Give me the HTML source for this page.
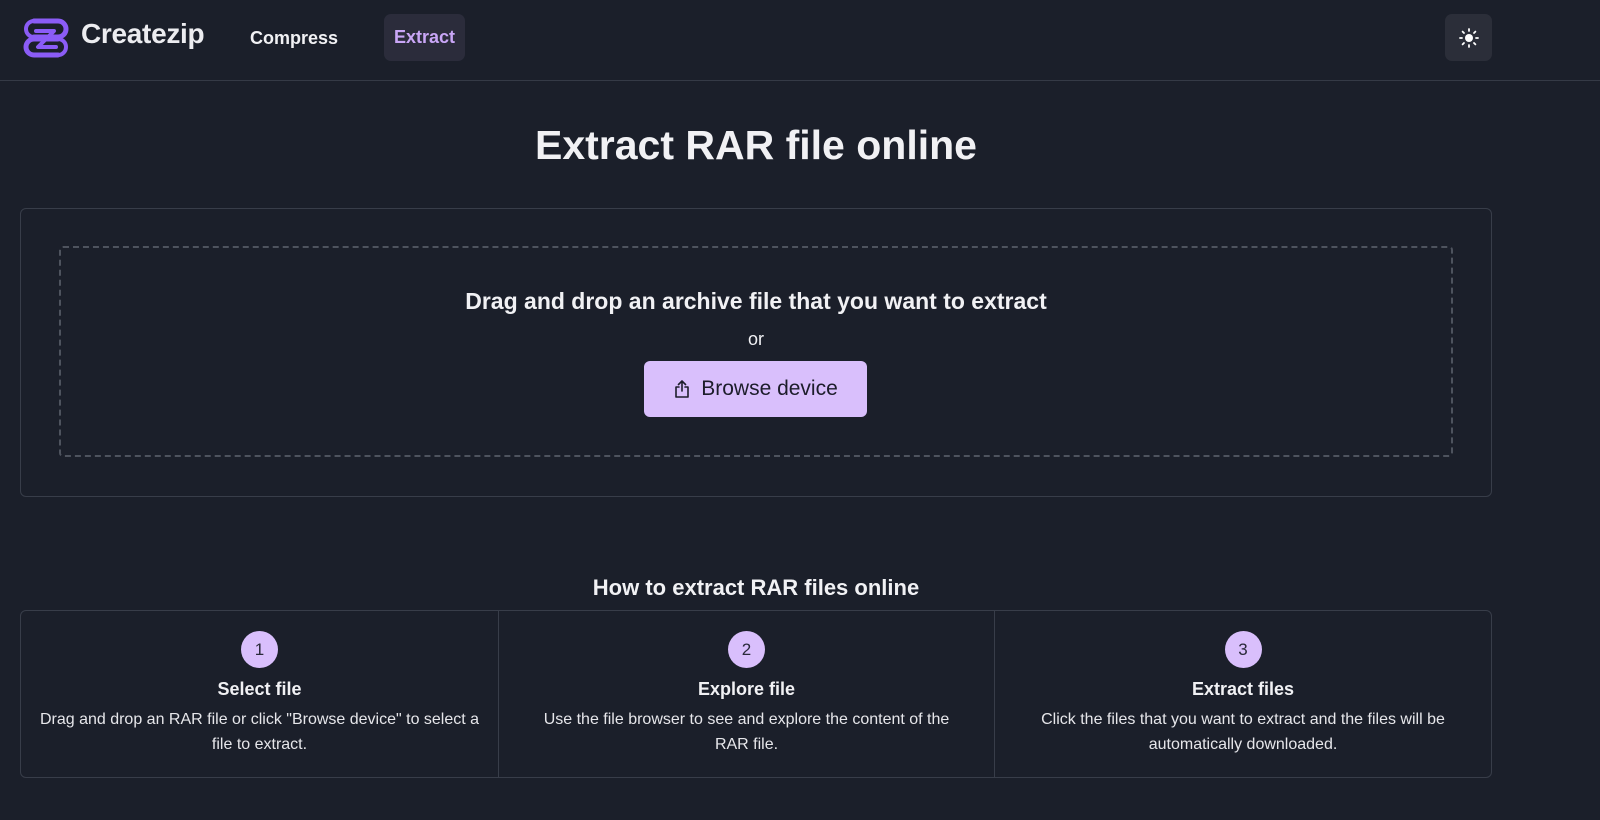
<!DOCTYPE html>
<html><head><meta charset="utf-8"><style>
*{box-sizing:border-box;margin:0;padding:0}
body{width:1600px;height:820px;background:#1b1f2a;color:#f1f1f4;font-family:"Liberation Sans",sans-serif;overflow:hidden;position:relative}
.nav{position:absolute;left:0;top:0;width:1600px;height:81px;border-bottom:1px solid #353a46}
.abs{position:absolute}
.logo{left:20px;top:17px}
.brand{left:81px;top:18px;font-size:28px;font-weight:bold;color:#ececf0;letter-spacing:-0.3px}
.compress{left:250px;top:28px;font-size:18px;font-weight:bold}
.extract{left:384px;top:14px;width:81px;height:47px;border-radius:7px;background:#2b2c3b;color:#c9a6f6;font-size:18px;font-weight:bold;text-align:center;line-height:47px}
.sun{left:1445px;top:14px;width:47px;height:47px;border-radius:7px;background:#2b2e39;display:flex;align-items:center;justify-content:center}
h1{position:absolute;top:122px;width:1512px;left:0;text-align:center;font-size:41px;font-weight:bold}
.box{left:20px;top:208px;width:1472px;height:289px;border:1px solid #383d49;border-radius:6px}
.dash{left:59px;top:246px;width:1394px;height:211px;border:2px dashed #4e535e;border-radius:4px}
.c{width:1512px;left:0;text-align:center}
.btn{left:644px;top:361px;width:223px;height:56px;border-radius:6px;background:#d9bffc;color:#1d1d2b;font-size:21px;display:flex;align-items:center;justify-content:center;gap:10px}
.cards{left:20px;top:610px;width:1472px;height:168px;border:1px solid #383d49;border-radius:6px;display:flex}
.card{text-align:center;border-right:1px solid #383d49;padding-top:20px}
.card:last-child{border-right:none}
.num{width:37px;height:37px;border-radius:50%;background:#d9bffc;color:#2a2a3a;margin:0 auto;line-height:37px;font-size:17px}
.t{font-size:18px;font-weight:bold;margin-top:11px}
.d{font-size:16px;line-height:25px;margin:7px auto 0;width:440px;color:#e6e6ea}
</style></head><body>
<div class="nav"></div>
<svg class="abs logo" width="52" height="42" viewBox="0 0 52 42"><path d="M14 4H38a8 8 0 0 1 0 16H14 M38 22H14a8 8 0 0 0 0 16H38" fill="none" stroke="#8b5cf6" stroke-width="5" stroke-linecap="round"/><path d="M14 4a8 8 0 0 0 0 16 M38 22a8 8 0 0 1 0 16 M16 14H34L18 30H36" fill="none" stroke="#8b5cf6" stroke-width="4" stroke-linecap="round" stroke-linejoin="round"/></svg>
<div class="abs brand">Createzip</div>
<div class="abs compress">Compress</div>
<div class="abs extract">Extract</div>
<div class="abs sun"><svg width="20" height="20" viewBox="0 0 20 20"><circle cx="10" cy="10" r="4" fill="#fff"/><g stroke="#fff" stroke-width="1.8" stroke-linecap="round"><path d="M10 1v2M10 17v2M1 10h2M17 10h2M3.6 3.6l1.4 1.4M15 15l1.4 1.4M3.6 16.4L5 15M15 5l1.4-1.4"/></g></svg></div>
<h1>Extract RAR file online</h1>
<div class="abs box"></div>
<div class="abs dash"></div>
<div class="abs c" style="top:288px;font-size:23px;font-weight:bold">Drag and drop an archive file that you want to extract</div>
<div class="abs c" style="top:329px;font-size:18px">or</div>
<div class="abs btn"><svg width="18" height="20" viewBox="0 0 18 20" fill="none" stroke="#1d1d2b" stroke-width="1.6" stroke-linecap="round" stroke-linejoin="round"><path d="M9 12V2M5.5 5.5L9 2l3.5 3.5M6 8H3v10h12V8h-3"/></svg>Browse device</div>
<div class="abs c" style="top:575px;font-size:22px;font-weight:bold">How to extract RAR files online</div>
<div class="abs cards">
<div class="card" style="width:478px"><div class="num">1</div><div class="t">Select file</div><div class="d">Drag and drop an RAR file or click "Browse device" to select a file to extract.</div></div>
<div class="card" style="width:496px"><div class="num">2</div><div class="t">Explore file</div><div class="d">Use the file browser to see and explore the content of the RAR file.</div></div>
<div class="card" style="flex:1"><div class="num">3</div><div class="t">Extract files</div><div class="d">Click the files that you want to extract and the files will be automatically downloaded.</div></div>
</div>
</body></html>
